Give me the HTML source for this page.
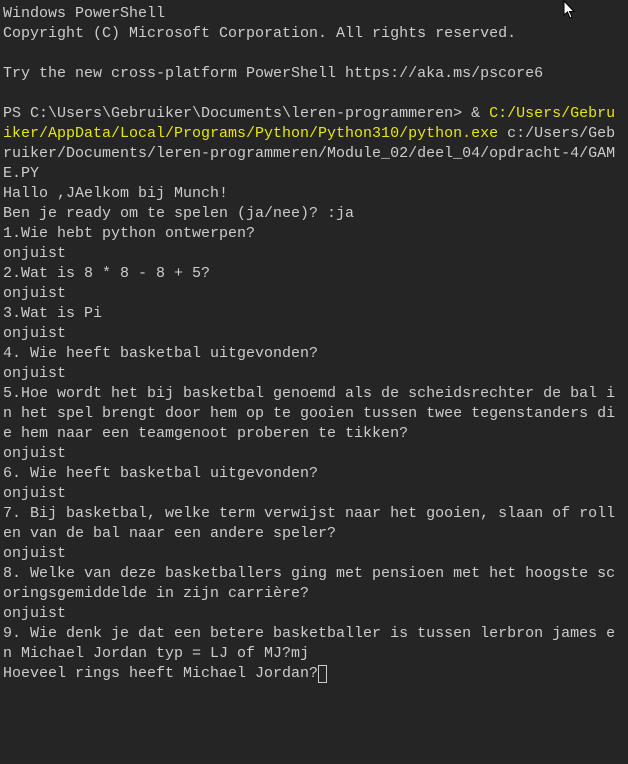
<!DOCTYPE html><html><head><style>
html,body{margin:0;background:#252526;width:628px;height:764px;overflow:hidden}
pre{margin:0;padding:4px 0 0 3px;font-family:"Liberation Mono",monospace;font-size:15px;line-height:20px;color:#cccccc;white-space:pre}
.y{color:#e5e510}
.c{position:absolute;left:318px;top:665px;width:7px;height:16px;border:1px solid #cccccc}
</style></head><body>
<pre>Windows PowerShell
Copyright (C) Microsoft Corporation. All rights reserved.

Try the new cross-platform PowerShell https://aka.ms/pscore6

PS C:\Users\Gebruiker\Documents\leren-programmeren&gt; &amp; <span class="y">C:/Users/Gebru</span>
<span class="y">iker/AppData/Local/Programs/Python/Python310/python.exe</span> c:/Users/Geb
ruiker/Documents/leren-programmeren/Module_02/deel_04/opdracht-4/GAM
E.PY
Hallo ,JAelkom bij Munch!
Ben je ready om te spelen (ja/nee)? :ja
1.Wie hebt python ontwerpen?
onjuist
2.Wat is 8 * 8 - 8 + 5?
onjuist
3.Wat is Pi
onjuist
4. Wie heeft basketbal uitgevonden?
onjuist
5.Hoe wordt het bij basketbal genoemd als de scheidsrechter de bal i
n het spel brengt door hem op te gooien tussen twee tegenstanders di
e hem naar een teamgenoot proberen te tikken?
onjuist
6. Wie heeft basketbal uitgevonden?
onjuist
7. Bij basketbal, welke term verwijst naar het gooien, slaan of roll
en van de bal naar een andere speler?
onjuist
8. Welke van deze basketballers ging met pensioen met het hoogste sc
oringsgemiddelde in zijn carrière?
onjuist
9. Wie denk je dat een betere basketballer is tussen lerbron james e
n Michael Jordan typ = LJ of MJ?mj
Hoeveel rings heeft Michael Jordan?</pre>
<div class="c"></div>
<svg style="position:absolute;left:563px;top:0" width="14" height="20" viewBox="0 0 14 20"><path d="M1 1 L1 15 L4.5 12 L7 18 L9 17 L6.5 11.5 L11 11.5 Z" fill="#fff" stroke="#000" stroke-width="1"/></svg>
</body></html>
